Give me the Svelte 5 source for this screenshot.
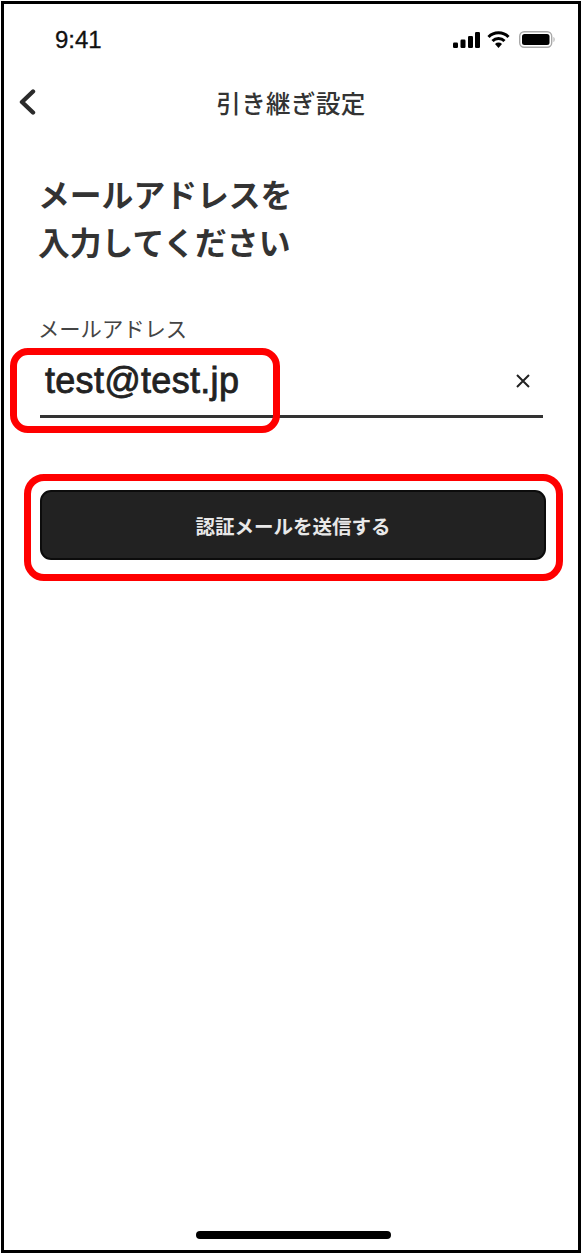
<script>
  const title = ['メールアドレスを', '入力してください'];
</script>

<div class="frame">
  <div class="status">
    <span class="time">9:41</span>
    <div class="indicators">
      <svg class="signal" width="27" height="16" viewBox="0 0 27 16" aria-hidden="true">
        <rect x="0" y="10.5" width="5" height="5.5" rx="1.2" />
        <rect x="7.5" y="7.5" width="5" height="8.5" rx="1.2" />
        <rect x="15" y="4" width="5" height="12" rx="1.2" />
        <rect x="22" y="0" width="5" height="16" rx="1.2" />
      </svg>
      <svg class="wifi" width="23" height="17" viewBox="0 0 23 17" aria-hidden="true">
        <path d="M1.5 6 A14 14 0 0 1 21.5 6" fill="none" stroke="#000" stroke-width="3" />
        <path d="M5.5 10 A8.5 8.5 0 0 1 17.5 10" fill="none" stroke="#000" stroke-width="3" />
        <path d="M8 13 A5 5 0 0 1 15 13 L11.5 17 Z" fill="#000" />
      </svg>
      <svg class="battery" width="37" height="17" viewBox="0 0 37 17" aria-hidden="true">
        <rect x="0.7" y="0.7" width="32" height="15.6" rx="4.5" fill="none" stroke="#a9a9a9" stroke-width="1.4" />
        <rect x="3" y="3" width="27.5" height="11" rx="2.5" fill="#000" />
        <path d="M34.5 6 C36 6.5 36 10.5 34.5 11 Z" fill="#a9a9a9" />
      </svg>
    </div>
  </div>

  <header class="nav">
    <svg class="back" width="18" height="26" viewBox="0 0 18 26" aria-hidden="true">
      <path d="M15 2.5 L4 13 L15 23.5" fill="none" stroke="#2b2b2b" stroke-width="4.4" stroke-linecap="round" stroke-linejoin="round" />
    </svg>
    <h2>引き継ぎ設定</h2>
  </header>

  <main class="content">
    <h1>
      {#each title as line}
        <span>{line}</span>
      {/each}
    </h1>

    <div class="field">
      <div class="label">メールアドレス</div>
      <div class="input-row">
        <span class="value">test@test.jp</span>
        <svg class="clear" width="16" height="16" viewBox="0 0 16 16" aria-hidden="true">
          <path d="M2 2 L14 14 M14 2 L2 14" stroke="#222" stroke-width="2" fill="none" />
        </svg>
      </div>
      <div class="callout callout-input"></div>
    </div>

    <div class="button-wrap">
      <button type="button">認証メールを送信する</button>
      <div class="callout callout-button"></div>
    </div>
  </main>

  <div class="home"></div>
</div>

<style>
  :global(body) {
    margin: 0;
    background: #fff;
  }

  .frame {
    box-sizing: border-box;
    position: relative;
    width: 580px;
    height: 1252px;
    margin: 1px 0 0 1px;
    border: 3px solid #000;
    background: #fff;
    font-family: "Noto Sans CJK JP", "Liberation Sans", sans-serif;
    color: #2b2b2b;
    display: flex;
    flex-direction: column;
    overflow: hidden;
  }

  .status {
    display: flex;
    justify-content: space-between;
    align-items: center;
    height: 29px;
    margin-top: 21px;
    padding: 0 22px 0 51px;
  }

  .time {
    font-family: "Liberation Sans", sans-serif;
    font-size: 24px;
    font-weight: 400;
    color: #111;
    -webkit-text-stroke: 0.3px #111;
    padding-top: 1px;
  }

  .indicators {
    display: flex;
    align-items: center;
  }

  .signal {
    margin-right: 7px;
  }

  .wifi {
    margin-right: 9px;
  }

  .signal rect {
    fill: #000;
  }

  .nav {
    position: relative;
    display: flex;
    align-items: center;
    justify-content: center;
    height: 44px;
    margin-top: 27px;
  }

  .back {
    position: absolute;
    left: 14px;
    top: 8px;
  }

  .nav h2 {
    margin: 0;
    font-size: 24.5px;
    font-weight: 500;
    line-height: 44px;
    color: #333;
    letter-spacing: 0.4px;
  }

  .content {
    padding: 0 35px 0 36px;
  }

  h1 {
    margin: 44px 0 0 -2px;
    font-size: 31.8px;
    font-weight: 700;
    line-height: 48px;
    color: #333;
  }

  h1 span {
    display: block;
  }

  .field {
    position: relative;
    margin-top: 48px;
  }

  .label {
    margin-left: -2px;
    font-size: 21.3px;
    line-height: 30px;
    color: #444;
  }

  .input-row {
    display: flex;
    align-items: center;
    justify-content: space-between;
    height: 68px;
    padding: 4px 12px 0 5px;
    border-bottom: 3px solid #333;
  }

  .value {
    font-family: "Liberation Sans", sans-serif;
    font-size: 36px;
    font-weight: 400;
    letter-spacing: 0.3px;
    color: #222;
    -webkit-text-stroke: 0.8px #222;
  }

  .button-wrap {
    position: relative;
    margin-top: 72px;
  }

  button {
    display: block;
    box-sizing: border-box;
    width: 506px;
    height: 70px;
    border: 2px solid #0c0c0c;
    border-radius: 11px;
    background: #222;
    color: #e8e8e8;
    font-family: inherit;
    font-size: 19.5px;
    font-weight: 700;
    padding: 0;
  }

  .callout {
    position: absolute;
    box-sizing: border-box;
    border: 7px solid #f00;
    pointer-events: none;
  }

  .callout-input {
    left: -30px;
    top: 35px;
    width: 270px;
    height: 85px;
    border-radius: 18px;
  }

  .callout-button {
    left: -16px;
    top: -16px;
    width: 539px;
    height: 107px;
    border-radius: 20px;
  }

  .home {
    position: absolute;
    left: 192px;
    bottom: 11px;
    width: 195px;
    height: 8px;
    border-radius: 4px;
    background: #000;
  }
</style>
